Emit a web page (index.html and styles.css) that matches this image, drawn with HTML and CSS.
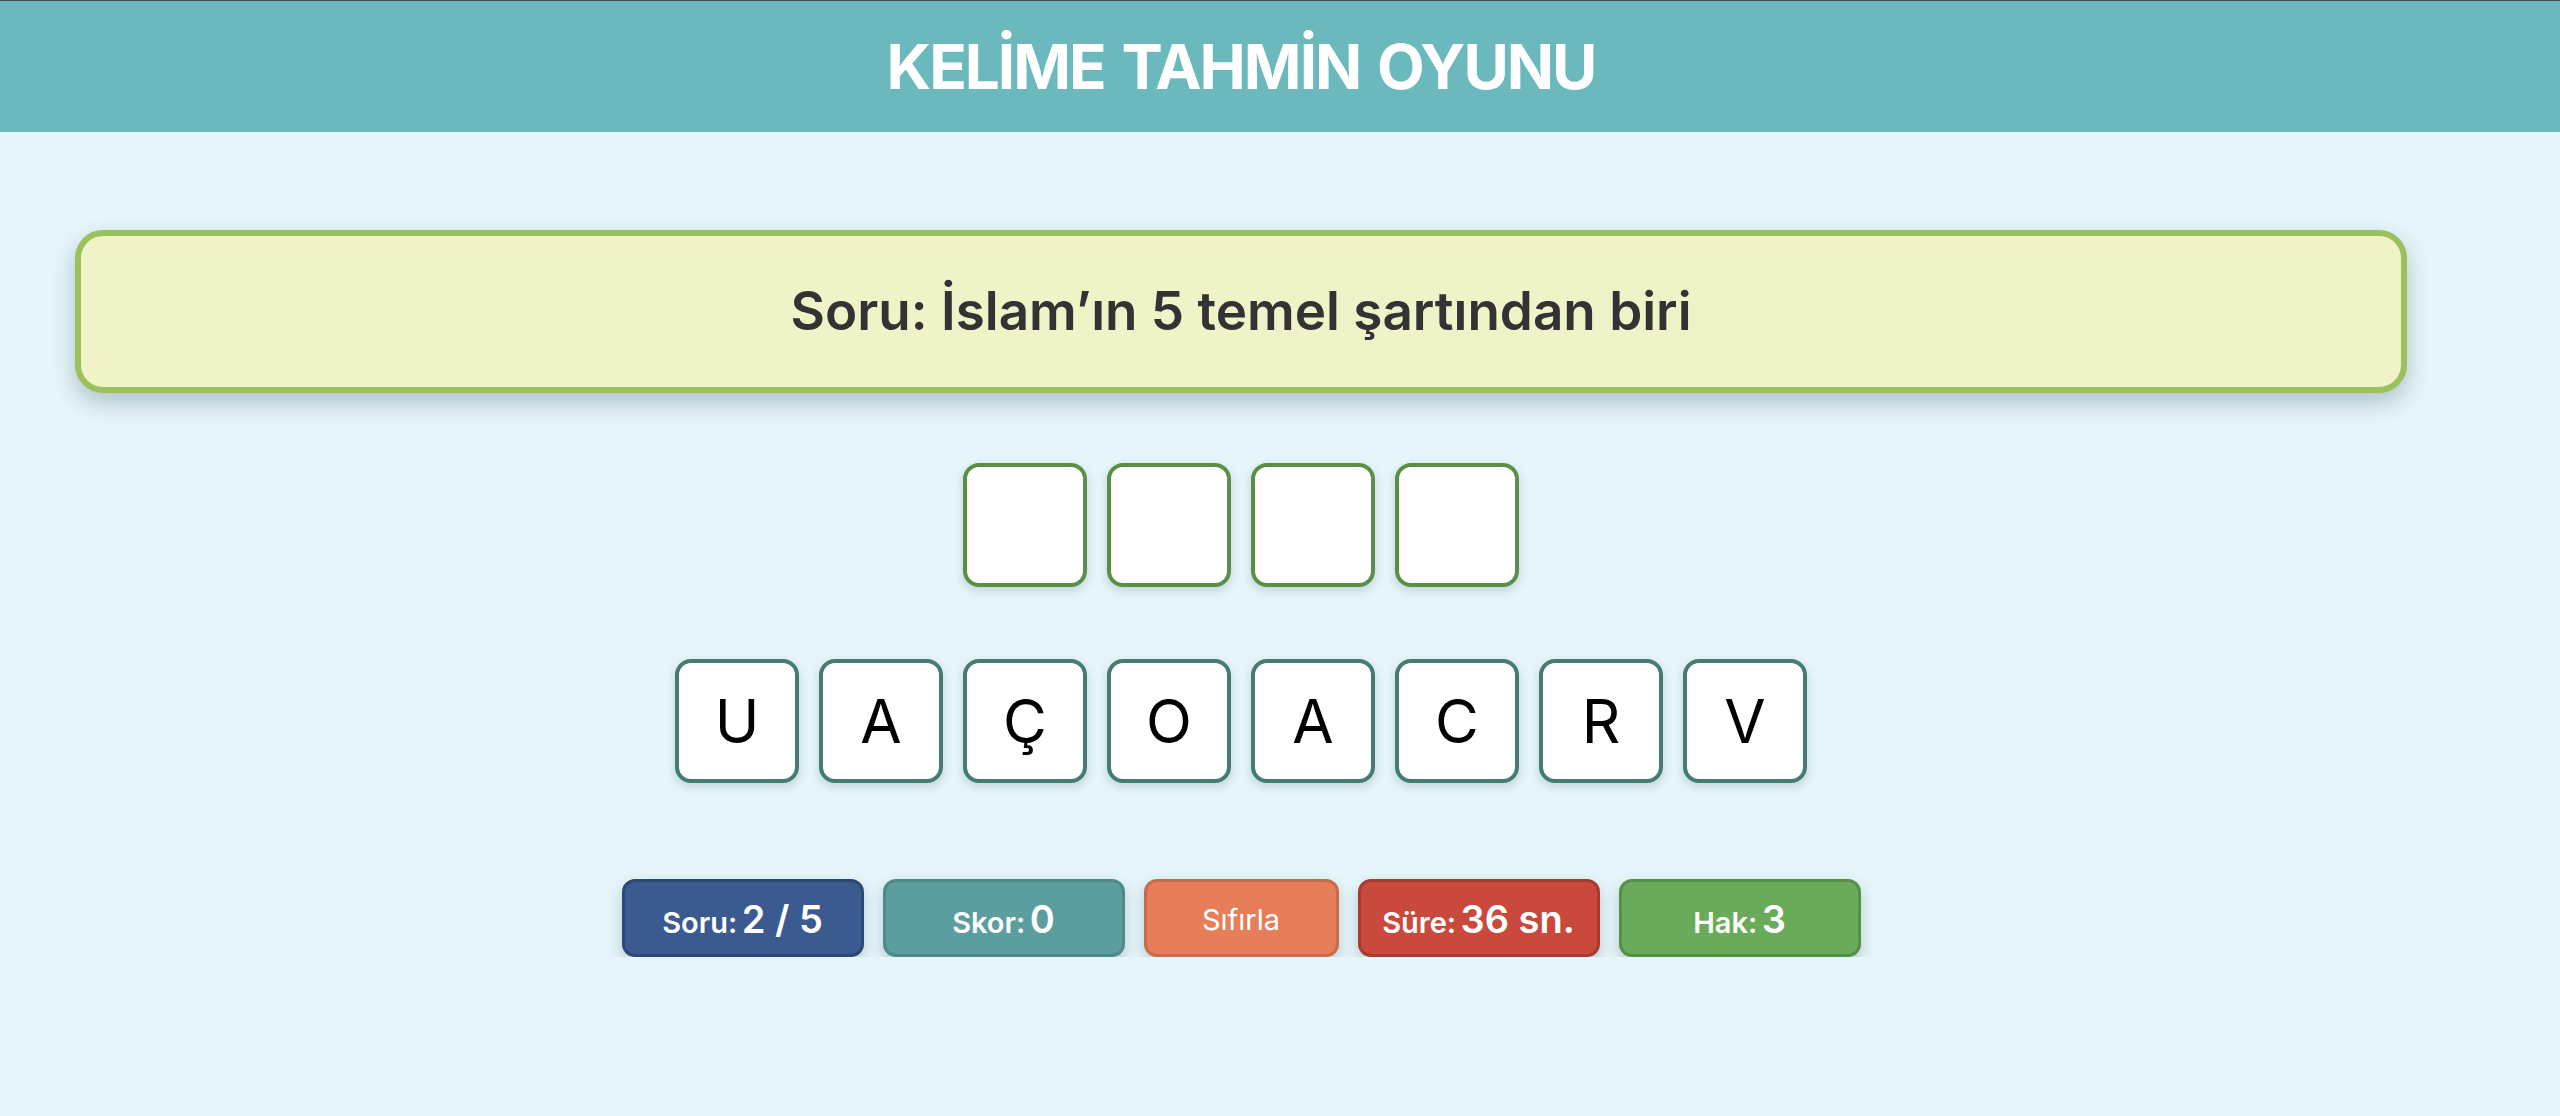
FILE: index.html
```html
<!DOCTYPE html>
<html lang="tr">
<head>
<meta charset="utf-8">
<title>Kelime Tahmin Oyunu</title>
<link rel="stylesheet" href="styles.css">
</head>
<body>
<header class="topbar">
  <div class="topbar-inner">
    <h1 class="title">KELİME TAHMİN OYUNU</h1>
  </div>
</header>
<main class="page">
  <section class="question">
    <p class="question-text">Soru: İslam’ın 5 temel şartından biri</p>
  </section>
  <div class="answer-row">
    <div class="slot"></div>
    <div class="slot"></div>
    <div class="slot"></div>
    <div class="slot"></div>
  </div>
  <div class="letters-row">
    <button class="tile">U</button>
    <button class="tile">A</button>
    <button class="tile">Ç</button>
    <button class="tile">O</button>
    <button class="tile">A</button>
    <button class="tile">C</button>
    <button class="tile">R</button>
    <button class="tile">V</button>
  </div>
  <div class="stats-row">
    <div class="stat stat-soru"><span class="stat-text"><span class="lbl">Soru:</span> <span class="num">2 / 5</span></span></div>
    <div class="stat stat-skor"><span class="stat-text"><span class="lbl">Skor:</span> <span class="num">0</span></span></div>
    <button class="stat stat-reset"><span class="stat-text">Sıfırla</span></button>
    <div class="stat stat-sure"><span class="stat-text"><span class="lbl">Süre:</span> <span class="num">36 sn.</span></span></div>
    <div class="stat stat-hak"><span class="stat-text"><span class="lbl">Hak:</span> <span class="num">3</span></span></div>
  </div>
</main>
</body>
</html>
```
FILE: styles.css
```css
* { box-sizing: border-box; }
html, body {
  margin: 0;
  padding: 0;
  background: #e5f5f9;
  font-family: "Inter", "Noto Sans", "Liberation Sans", sans-serif;
}
.topbar {
  background: #6bb9bd;
  border-top: 1px solid #4a4a4a;
  height: 132px;
}
.topbar-inner {
  width: 2482px;
  height: 100%;
  display: flex;
  align-items: center;
  justify-content: center;
}
.title {
  margin: 0;
  color: #ffffff;
  font-weight: 700;
  font-size: 62px;
  line-height: 1;
  letter-spacing: -2px;
  word-spacing: 4px;
}
.page {
  width: 2482px;
  padding: 98px 75px 0;
  display: flex;
  flex-direction: column;
  align-items: center;
}
.question {
  width: 100%;
  height: 163px;
  background: #f0f3c8;
  border: 6px solid #9cc15c;
  border-radius: 28px;
  box-shadow: 0 10px 22px rgba(40, 70, 80, 0.28);
  display: flex;
  align-items: center;
  justify-content: center;
}
.question-text {
  margin: 0;
  color: #333333;
  font-weight: 600;
  font-size: 53px;
  line-height: 1;
}
.answer-row {
  margin-top: 70px;
  display: flex;
  gap: 20px;
}
.slot {
  width: 124px;
  height: 124px;
  background: #ffffff;
  border: 4px solid #5a8f46;
  border-radius: 16px;
  box-shadow: 0 4px 10px rgba(40, 70, 80, 0.18);
}
.letters-row {
  margin-top: 72px;
  display: flex;
  gap: 20px;
}
.tile {
  width: 124px;
  height: 124px;
  padding: 0;
  background: #ffffff;
  border: 4px solid #467b6f;
  border-radius: 16px;
  box-shadow: 0 4px 10px rgba(40, 70, 80, 0.18);
  font-family: "Inter", "Noto Sans", sans-serif;
  font-weight: 400;
  font-size: 60px;
  color: #000000;
  display: flex;
  align-items: center;
  justify-content: center;
  line-height: 1;
}
.stats-row {
  margin-top: 96px;
  display: flex;
  gap: 19px;
}
.stat {
  width: 242px;
  height: 78px;
  padding: 0;
  border-radius: 13px;
  border: 3px solid;
  color: #ffffff;
  display: flex;
  align-items: center;
  justify-content: center;
  box-shadow: 0 6px 14px rgba(40, 70, 80, 0.24);
  font-family: "Inter", "Noto Sans", sans-serif;
}
.stat-text {
  white-space: nowrap;
  line-height: 1;
  padding-top: 2px;
}
.lbl {
  font-weight: 600;
  font-size: 29px;
}
.num {
  font-weight: 600;
  font-size: 38px;
}
.stat-soru { background: #3a5a90; border-color: #2e4876; }
.stat-skor { background: #5c9e9e; border-color: #4f8a8a; }
.stat-reset {
  width: 195px;
  background: #e67e5a;
  border-color: #c96a4c;
  font-weight: 400;
  font-size: 29px;
}
.stat-sure { background: #c94a3d; border-color: #a93a30; }
.stat-hak { background: #6aaa5b; border-color: #568f48; }
```
